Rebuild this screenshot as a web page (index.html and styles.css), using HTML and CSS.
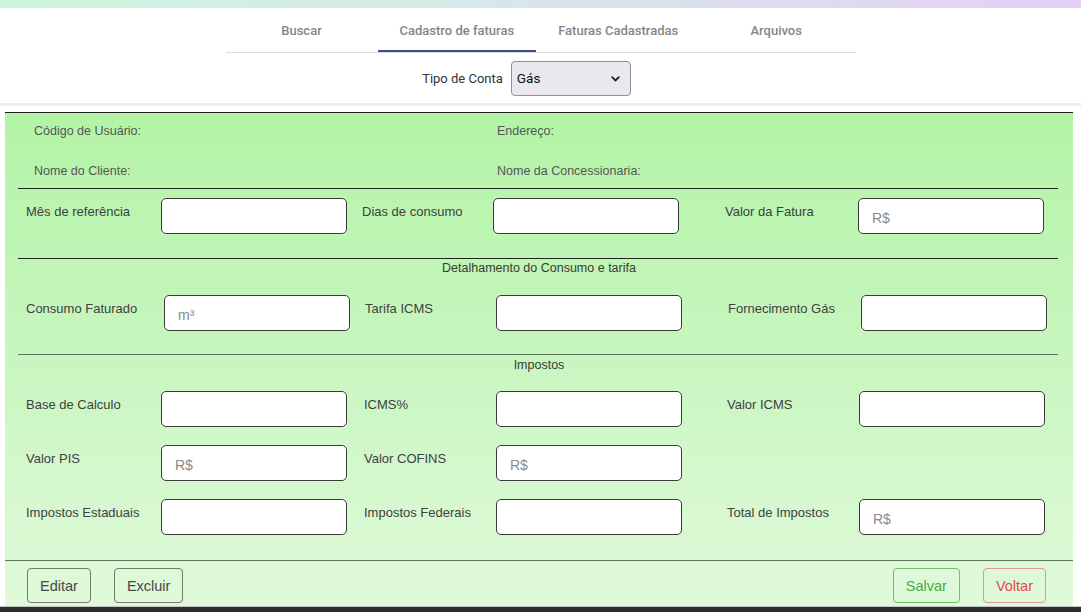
FILE: index.html
```html
<!DOCTYPE html>
<html lang="pt-BR">
<head>
<meta charset="utf-8">
<title>Cadastro de faturas</title>
<link rel="stylesheet" href="styles.css">
</head>
<body>
<div class="topbar"></div>
<nav class="tabs">
  <a class="tab">Buscar</a>
  <a class="tab tab-active">Cadastro de faturas</a>
  <a class="tab">Faturas Cadastradas</a>
  <a class="tab">Arquivos</a>
</nav>
<div class="tipo">
  <label class="tipo-label" for="tipo">Tipo de Conta</label>
  <div class="select-wrap">
    <select id="tipo" class="select"><option>Gás</option></select>
    <svg class="chev" width="9" height="6" viewBox="0 0 9 6"><polyline points="1.2,1.2 4.5,4.5 7.8,1.2" fill="none" stroke="#222" stroke-width="1.8" stroke-linecap="round" stroke-linejoin="round"/></svg>
  </div>
</div>
<form class="fatura">
  <div class="info">
    <span>Código de Usuário:</span><span>Endereço:</span>
    <span>Nome do Cliente:</span><span>Nome da Concessionaria:</span>
  </div>
  <hr class="rule">
  <div class="section s1">
    <div class="row row-first">
      <div class="f f1"><span class="lbl">Mês de referência</span><input class="inp" type="text"></div>
      <div class="f f2"><span class="lbl">Dias de consumo</span><input class="inp" type="text"></div>
      <div class="f f3"><span class="lbl">Valor da Fatura</span><input class="inp" type="text" placeholder="R$"></div>
    </div>
  </div>
  <hr class="rule">
  <div class="section s2">
    <div class="sec-title">Detalhamento do Consumo e tarifa</div>
    <div class="row row-consumo">
      <div class="f f1"><span class="lbl">Consumo Faturado</span><input class="inp" type="text" placeholder="m³"></div>
      <div class="f f2"><span class="lbl">Tarifa ICMS</span><input class="inp" type="text"></div>
      <div class="f f3"><span class="lbl">Fornecimento Gás</span><input class="inp" type="text"></div>
    </div>
  </div>
  <hr class="rule rule-soft">
  <div class="section s3">
    <div class="sec-title">Impostos</div>
    <div class="rows">
      <div class="row">
        <div class="f f1"><span class="lbl">Base de Calculo</span><input class="inp" type="text"></div>
        <div class="f f2"><span class="lbl">ICMS%</span><input class="inp" type="text"></div>
        <div class="f f3"><span class="lbl">Valor ICMS</span><input class="inp" type="text"></div>
      </div>
      <div class="row">
        <div class="f f1"><span class="lbl">Valor PIS</span><input class="inp" type="text" placeholder="R$"></div>
        <div class="f f2"><span class="lbl">Valor COFINS</span><input class="inp" type="text" placeholder="R$"></div>
      </div>
      <div class="row">
        <div class="f f1"><span class="lbl">Impostos Estaduais</span><input class="inp" type="text"></div>
        <div class="f f2"><span class="lbl">Impostos Federais</span><input class="inp" type="text"></div>
        <div class="f f3"><span class="lbl">Total de Impostos</span><input class="inp" type="text" placeholder="R$"></div>
      </div>
    </div>
  </div>
  <hr class="rule-full">
  <div class="actions">
    <div class="group">
      <button type="button" class="btn">Editar</button>
      <button type="button" class="btn">Excluir</button>
    </div>
    <div class="group">
      <button type="button" class="btn btn-save">Salvar</button>
      <button type="button" class="btn btn-back">Voltar</button>
    </div>
  </div>
</form>
<div class="bottombar"></div>
</body>
</html>
```
FILE: styles.css
```css
* { box-sizing: border-box; }

html, body {
  margin: 0;
  padding: 0;
  background: #ffffff;
  overflow: hidden;
  font-family: "Liberation Sans", Arial, sans-serif;
  color: #333;
}

.topbar {
  height: 8px;
  background: linear-gradient(90deg, #cdf6de 0%, #d8e6ea 50%, #e4cff7 100%);
}

/* Tabs */
.tabs {
  width: 630px;
  margin: 0 auto;
  display: flex;
  border-bottom: 1px solid #dcdcdc;
}

.tab {
  height: 44px;
  min-width: 152px;
  padding: 0 22px;
  display: flex;
  align-items: center;
  justify-content: center;
  font-family: Roboto, "Liberation Sans", sans-serif;
  font-weight: 500;
  font-size: 13px;
  color: #858585;
  white-space: nowrap;
}

.tab-active {
  box-shadow: inset 0 -2px 0 #3d4b8c;
}

/* Tipo de conta */
.tipo {
  height: 53px;
  display: flex;
  align-items: center;
  justify-content: center;
  gap: 8px;
  padding-right: 28px;
  border-bottom: 3px solid #ececec;
  margin-bottom: 6px;
}

.tipo-label {
  font-family: Roboto, "Liberation Sans", sans-serif;
  font-size: 13px;
  color: #333;
}

.select-wrap {
  position: relative;
  width: 120px;
  height: 35px;
}

.select {
  -webkit-appearance: none;
  appearance: none;
  width: 100%;
  height: 100%;
  padding: 0 5px;
  border: 1px solid #8f8f9d;
  border-radius: 4px;
  background: #e9e9ed;
  font-family: Roboto, "Liberation Sans", sans-serif;
  font-size: 13.5px;
  color: #111;
}

.chev {
  position: absolute;
  right: 11px;
  top: 15px;
}

/* Form */
.fatura {
  margin: 0 0 0 5px;
  width: 1068px;
  border-top: 1px solid #1e1e1e;
  background: linear-gradient(180deg, #b3f4a6 0%, #c6f6bd 45%, #e0f9da 100%);
}

.info {
  display: grid;
  grid-template-columns: 463px 1fr;
  row-gap: 20px;
  padding: 8px 0 7px 29px;
  font-size: 12.5px;
  line-height: 20px;
  color: #555;
}

.rule {
  margin: 0 15px 0 13px;
  border: 0;
  border-top: 1px solid #222;
  height: 0;
}

.rule-soft {
  border-top-color: #5a735a;
}

.rule-full {
  margin: 0;
  border: 0;
  border-top: 1px solid #5f775f;
  height: 0;
}

.s1 { padding: 9px 0 24px; }
.s2 { padding: 1px 0 23px; }
.s3 { padding: 2px 0 25px; }

.sec-title {
  text-align: center;
  font-size: 12.5px;
  line-height: 16px;
  color: #3a3a3a;
}

.s2 .row { margin-top: 19px; }

.rows {
  margin-top: 18px;
  display: flex;
  flex-direction: column;
  gap: 18px;
}

.row {
  display: flex;
  padding-left: 21px;
}

.f {
  display: flex;
  align-items: flex-start;
}

.lbl {
  width: 132px;
  padding-top: 6px;
  font-size: 13px;
  line-height: 16px;
  color: #404040;
  white-space: nowrap;
}

.f1 .lbl { width: 135px; }
.f2 { margin-left: 17px; }
.f3 { margin-left: 45px; }

.row-first .f2 { margin-left: 15px; }
.row-first .f2 .lbl { width: 131px; }
.row-first .f3 { margin-left: 46px; }
.row-first .f3 .lbl { width: 133px; }

.row-consumo .f1 .lbl { width: 138px; }
.row-consumo .f2 { margin-left: 15px; }
.row-consumo .f2 .lbl { width: 131px; }
.row-consumo .f3 { margin-left: 46px; }
.row-consumo .f3 .lbl { width: 133px; }

.inp {
  width: 186px;
  height: 36px;
  border: 1px solid #3a3a3a;
  border-radius: 5px;
  background: #fff;
  padding: 4px 13px 0;
  font-family: "Liberation Sans", Arial, sans-serif;
  font-size: 14px;
  color: #333;
}

.inp::placeholder {
  color: #8a8a8a;
}

/* Actions */
.actions {
  display: flex;
  justify-content: space-between;
  padding: 7px 27px 3px 22px;
}

.group {
  display: flex;
  gap: 23px;
}

.btn {
  height: 35px;
  padding: 0 12px;
  border: 1px solid #6b7f6b;
  border-radius: 4px;
  background: transparent;
  font-family: "Liberation Sans", Arial, sans-serif;
  font-size: 14.5px;
  color: #474747;
}

.btn-save {
  color: #49a84a;
  border-color: #72bf72;
}

.btn-back {
  color: #df4a4a;
  border-color: #e29a94;
}

.bottombar {
  height: 6px;
  border-top: 1px solid #c4c4c4;
  background: #2d2d2d;
}
```
